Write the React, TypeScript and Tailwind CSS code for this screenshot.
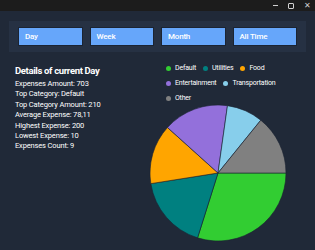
import React from 'react';

const slices = [
  { name: 'Default', color: '#32cd32', deg: 107.5 },
  { name: 'Utilities', color: '#008080', deg: 63.5 },
  { name: 'Food', color: '#ffa500', deg: 51 },
  { name: 'Entertainment', color: '#9370db', deg: 56 },
  { name: 'Transportation', color: '#87ceeb', deg: 31 },
  { name: 'Other', color: '#808080', deg: 51 },
];

function Pie() {
  const cx = 70;
  const cy = 70;
  const r = 68;
  let start = 0;
  const paths = slices.map((s) => {
    const a0 = (start * Math.PI) / 180;
    const a1 = ((start + s.deg) * Math.PI) / 180;
    start += s.deg;
    const x0 = cx + r * Math.cos(a0);
    const y0 = cy + r * Math.sin(a0);
    const x1 = cx + r * Math.cos(a1);
    const y1 = cy + r * Math.sin(a1);
    const large = s.deg > 180 ? 1 : 0;
    return (
      <path
        key={s.name}
        d={`M${cx},${cy} L${x0},${y0} A${r},${r} 0 ${large} 1 ${x1},${y1} Z`}
        fill={s.color}
        stroke="#1a2230"
        strokeWidth="0.6"
      />
    );
  });
  return (
    <svg width="140" height="140" viewBox="0 0 140 140">
      {paths}
    </svg>
  );
}

export default function App() {
  const periods = ['Day', 'Week', 'Month', 'All Time'];
  const details = [
    'Expenses Amount: 703',
    'Top Category: Default',
    'Top Category Amount: 210',
    'Average Expense: 78,11',
    'Highest Expense: 200',
    'Lowest Expense: 10',
    'Expenses Count: 9',
  ];

  return (
    <div className="w-[315px] h-[250px] bg-[#202938] flex flex-col overflow-hidden" style={{ fontFamily: 'Roboto, "Noto Sans", sans-serif' }}>
      {/* title bar */}
      <div className="h-[11px] bg-[#1c1c1c] flex justify-end items-center gap-[10px] pr-[4px] text-[#d0d0d0]">
        <div className="w-[5px] h-px bg-[#d0d0d0]" />
        <div className="w-[6px] h-[6px] border border-[#d0d0d0] rounded-[1px]" />
        <span className="text-[8px] leading-none">✕</span>
      </div>

      <div className="flex-1 px-[9px] pt-[10px]">
        <div className="bg-[#263143] h-[31px] flex items-center gap-[7px] px-[9px]">
          {periods.map((p) => (
            <button
              key={p}
              className="flex-1 h-[19px] bg-[#66a6fa] border border-[#1b2433] text-left pl-[6px] text-white text-[8px] font-medium tracking-[-0.2px]"
            >
              {p}
            </button>
          ))}
        </div>

        <div className="flex mt-[9px]">
          <div className="w-[148px] pl-[6px] text-white">
            <div className="text-[9.5px] font-bold leading-[13px] mt-[3px] tracking-[-0.35px]">Details of current Day</div>
            <div className="mt-[2px] flex flex-col">
              {details.map((d) => (
                <div key={d} className="text-[7.5px] h-[10.4px] leading-[10.4px] tracking-[-0.15px]">{d}</div>
              ))}
            </div>
          </div>
          <div className="flex-1 flex flex-col">
            <div className="flex flex-wrap gap-x-[7px] gap-y-[5px] pl-[10px] pt-[2px] text-white text-[7px] leading-[10px] w-[150px] tracking-[-0.2px]">
              {slices.map((s) => (
                <div key={s.name} className="flex items-center gap-[4px]">
                  <span className="w-[5px] h-[5px] rounded-full" style={{ background: s.color }} />
                  {s.name}
                </div>
              ))}
            </div>
            <div className="mt-0 ml-[-8px]">
              <Pie />
            </div>
          </div>
        </div>
      </div>
    </div>
  );
}
